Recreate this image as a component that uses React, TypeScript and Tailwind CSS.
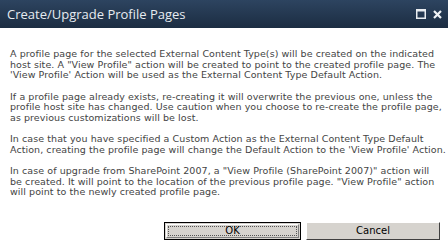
import React from 'react';

const paragraphs: string[][] = [
  [
    'A profile page for the selected External Content Type(s) will be created on the indicated',
    'host site. A "View Profile" action will be created to point to the created profile page. The',
    "'View Profile' Action will be used as the External Content Type Default Action.",
  ],
  [
    'If a profile page already exists, re-creating it will overwrite the previous one, unless the',
    'profile host site has changed. Use caution when you choose to re-create the profile page,',
    'as previous customizations will be lost.',
  ],
  [
    'In case that you have specified a Custom Action as the External Content Type Default',
    "Action, creating the profile page will change the Default Action to the 'View Profile' Action.",
  ],
  [
    'In case of upgrade from SharePoint 2007, a "View Profile (SharePoint 2007)" action will',
    'be created. It will point to the location of the previous profile page. "View Profile" action',
    'will point to the newly created profile page.',
  ],
];

export default function App() {
  return (
    <div className="w-[448px] h-[243px] bg-white overflow-hidden flex flex-col">
      {/* title bar */}
      <div className="h-[28px] bg-gradient-to-b from-[#2d4460] to-[#1c2d42] flex items-center pl-[7px] pr-[6px]">
        <span className="flex-1 text-[13px] text-[#e6ebf0] font-['Open_Sans',sans-serif] leading-none">
          Create/Upgrade Profile Pages
        </span>
        <svg width="10" height="10" viewBox="0 0 10 10" className="mr-[7px]">
          <rect x="0.75" y="0.75" width="8.5" height="8.5" fill="none" stroke="#e8ecf0" strokeWidth="1.5" />
          <rect x="0" y="0" width="10" height="2.5" fill="#e8ecf0" />
        </svg>
        <svg width="9" height="9" viewBox="0 0 9 9">
          <path d="M1 1 L8 8 M8 1 L1 8" stroke="#f0f3f6" strokeWidth="2.2" />
        </svg>
      </div>

      {/* body */}
      <div className="flex-1 flex flex-col pl-[10px] pt-[21px] text-[#444] font-['DejaVu_Sans',sans-serif] text-[9.5px] leading-[10.5px] tracking-[0.07px]">
        <div className="flex flex-col gap-[11px]">
          {paragraphs.map((p, i) => (
            <div key={i}>
              {p.map((line, j) => (
                <div key={j} className="whitespace-nowrap">
                  {line}
                </div>
              ))}
            </div>
          ))}
        </div>
      </div>

      {/* buttons */}
      <div className="flex justify-end gap-[5px] pr-[8px] pb-[3px] font-['DejaVu_Sans',sans-serif] text-[10px] text-black">
        <button className="w-[137px] h-[18px] bg-[#d6d3ce] border border-black p-[1px]">
          <div className="h-full border border-t-white border-l-white border-r-[#808080] border-b-[#808080] p-[1px]">
            <div className="h-full border border-dotted border-[#555] flex items-center justify-center leading-none">
              OK
            </div>
          </div>
        </button>
        <button className="w-[134px] h-[18px] bg-[#d6d3ce] border border-t-white border-l-white border-r-[#404040] border-b-[#404040] flex items-center justify-center leading-none">
          Cancel
        </button>
      </div>
    </div>
  );
}
